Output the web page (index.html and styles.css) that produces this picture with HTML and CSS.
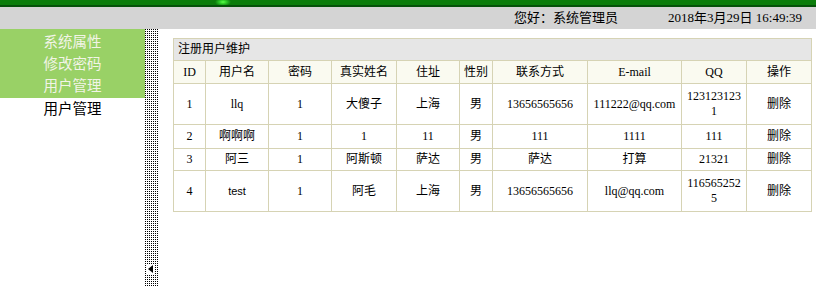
FILE: index.html
```html
<!DOCTYPE html>
<html lang="zh">
<head>
<meta charset="utf-8">
<title>注册用户维护</title>
<link rel="stylesheet" href="styles.css">
</head>
<body>
<div class="top"></div>
<div class="bar">
  <span class="hello">您好：系统管理员</span>
  <span class="clock">2018年3月29日 16:49:39</span>
</div>
<div class="main">
  <div class="side">
    <div class="menu">
      <div class="item">系统属性</div>
      <div class="item">修改密码</div>
      <div class="item">用户管理</div>
    </div>
    <div class="sub">用户管理</div>
  </div>
  <div class="split"><span class="arrow"></span></div>
  <div class="content">
    <table class="grid">
      <colgroup>
        <col class="c-id"><col class="c-user"><col class="c-pwd"><col class="c-name"><col class="c-addr">
        <col class="c-sex"><col class="c-tel"><col class="c-mail"><col class="c-qq"><col class="c-op">
      </colgroup>
      <tr class="title"><td colspan="10">注册用户维护</td></tr>
      <tr class="head">
        <td>ID</td><td>用户名</td><td>密码</td><td>真实姓名</td><td>住址</td><td>性别</td><td>联系方式</td><td>E-mail</td><td>QQ</td><td>操作</td>
      </tr>
      <tr class="tall">
        <td>1</td><td>llq</td><td>1</td><td>大傻子</td><td>上海</td><td>男</td><td>13656565656</td><td>111222@qq.com</td><td class="qq">1231231231</td><td><a class="del">删除</a></td>
      </tr>
      <tr class="r2">
        <td>2</td><td>啊啊啊</td><td>1</td><td>1</td><td>11</td><td>男</td><td>111</td><td>1111</td><td class="qq">111</td><td><a class="del">删除</a></td>
      </tr>
      <tr class="r3">
        <td>3</td><td>阿三</td><td>1</td><td>阿斯顿</td><td>萨达</td><td>男</td><td>萨达</td><td>打算</td><td class="qq">21321</td><td><a class="del">删除</a></td>
      </tr>
      <tr class="tall">
        <td>4</td><td><span class="sans">test</span></td><td>1</td><td>阿毛</td><td>上海</td><td>男</td><td>13656565656</td><td>llq@qq.com</td><td class="qq">1165652525</td><td><a class="del">删除</a></td>
      </tr>
    </table>
  </div>
</div>
</body>
</html>
```
FILE: styles.css
```css
html, body {
  margin: 0;
  padding: 0;
  background: #fff;
}
body {
  width: 816px;
  height: 286px;
  overflow: hidden;
  font-family: "Liberation Serif", "Noto Sans CJK SC", serif;
  font-size: 12px;
  color: #000;
}
.top {
  height: 5px;
  background: radial-gradient(ellipse 8px 4px at 223px 2px, #5dff4a 0, #2fd02a 40%, rgba(11,125,11,0) 100%), #0b7d0b;
  border-bottom: 2px solid #05520a;
}
.bar {
  height: 22px;
  background: #d4d4d4;
  display: flex;
  justify-content: flex-end;
  align-items: center;
  padding-right: 14px;
  font-size: 13px;
  line-height: 22px;
}
.hello {
  margin-right: 50px;
}
.main {
  display: flex;
  height: 257px;
}
.side {
  width: 145px;
  flex: none;
}
.menu {
  background: #99d166;
  padding-top: 1px;
  height: 68px;
}
.item, .sub {
  text-align: center;
  font-family: "Noto Sans CJK SC", sans-serif;
  font-size: 14.5px;
  line-height: 22px;
  height: 22px;
}
.item {
  color: #f2f4e6;
}
.sub {
  color: #000;
  margin-top: -1px;
}
.split {
  width: 13px;
  flex: none;
  background-image: conic-gradient(from 0deg at 1px 1px, transparent 75%, #000 0);
  background-size: 2px 2px;
  background-position: 0 0;
  display: flex;
  flex-direction: column;
  justify-content: flex-end;
  align-items: flex-start;
  padding-bottom: 13px;
  box-sizing: border-box;
}
.arrow {
  width: 0;
  height: 0;
  margin-left: 3px;
  border-top: 4px solid transparent;
  border-bottom: 4px solid transparent;
  border-right: 5px solid #000;
  box-shadow: 0 0 0 1px #fff;
  background: #fff;
}
.content {
  flex: 1;
  padding: 9px 6px 0 15px;
}
.grid {
  border-collapse: collapse;
  width: 638px;
  table-layout: fixed;
}
.grid td {
  border: 1px solid #d6d3b4;
  text-align: center;
  padding: 3px 3px;
  line-height: 15px;
  word-break: break-all;
}
.c-id { width: 32px; }
.c-user { width: 63px; }
.c-pwd { width: 63px; }
.c-name { width: 65px; }
.c-addr { width: 63px; }
.c-sex { width: 33px; }
.c-tel { width: 95px; }
.c-mail { width: 94px; }
.c-qq { width: 65px; }
.c-op { width: 65px; }
.grid .title td {
  background: #e6e6e6;
  text-align: left;
  padding: 3px 4px;
  height: 15px;
}
.grid .head td {
  background: #fafaf0;
  height: 16px;
}
.grid .tall td {
  height: 34px;
}
.grid .r2 td {
  height: 17px;
}
.grid .r3 td {
  height: 15px;
}
.grid td.qq {
  padding: 3px 4px;
}
.del {
  color: #000;
  text-decoration: none;
}
.sans {
  font-family: "Liberation Sans", sans-serif;
  font-size: 11px;
}
```
